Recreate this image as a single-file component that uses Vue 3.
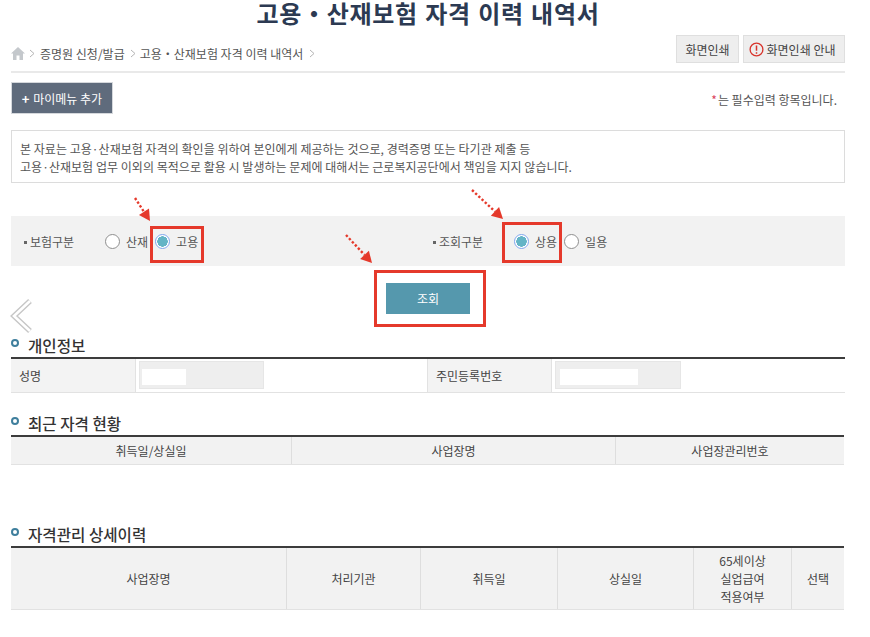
<script setup>
const crumbs = ['증명원 신청/발급', '고용・산재보험 자격 이력 내역서']
const recentCols = [
  { label: '취득일/상실일', width: 281 },
  { label: '사업장명', width: 324 },
  { label: '사업장관리번호', width: 228 }
]
const historyCols = [
  { label: ['사업장명'], width: 276 },
  { label: ['처리기관'], width: 134 },
  { label: ['취득일'], width: 137 },
  { label: ['상실일'], width: 136 },
  { label: ['65세이상', '실업급여', '적용여부'], width: 98 },
  { label: ['선택'], width: 52 }
]
function arrow(x, y, w, h) {
  const len = Math.hypot(w - 2, h - 2)
  const ux = (w - 2) / len
  const uy = (h - 2) / len
  const tipX = w - 1
  const tipY = h - 1
  const baseX = tipX - ux * 11
  const baseY = tipY - uy * 11
  const px = -uy * 6
  const py = ux * 6
  return {
    x, y, w, h,
    endX: baseX,
    endY: baseY,
    head: `M${tipX} ${tipY}L${baseX + px} ${baseY + py}L${baseX - px} ${baseY - py}Z`
  }
}
const arrows = [arrow(134, 197, 17, 25), arrow(471, 189, 33, 31), arrow(345, 234, 28, 30)]
</script>

<template>
  <div class="page">
    <h1 class="title">고용・산재보험 자격 이력 내역서</h1>

    <div class="crumb-row">
      <nav class="crumbs">
        <svg class="home" width="14" height="13" viewBox="0 0 14 13"><path d="M7 0 14 6.5H12V13H8.5V8.5H5.5V13H2V6.5H0Z" fill="#c4c8cc"/></svg>
        <svg class="sep" width="6" height="9" viewBox="0 0 6 9"><path d="M1 1 5 4.5 1 8" fill="none" stroke="#b5b5b5"/></svg>
        <span>{{ crumbs[0] }}</span>
        <svg class="sep wide" width="6" height="9" viewBox="0 0 6 9"><path d="M1 1 5 4.5 1 8" fill="none" stroke="#b5b5b5"/></svg>
        <span>{{ crumbs[1] }}</span>
        <svg class="sep last" width="6" height="9" viewBox="0 0 6 9"><path d="M1 1 5 4.5 1 8" fill="none" stroke="#b5b5b5"/></svg>
      </nav>
      <div class="print-btns">
        <button class="grey-btn first">화면인쇄</button>
        <button class="grey-btn second">
          <svg width="15" height="15" viewBox="0 0 15 15"><circle cx="7.5" cy="7.5" r="6.4" fill="none" stroke="#d8322a" stroke-width="1.3"/><path d="M7.5 3.5V8.8M7.5 10.2V11.7" stroke="#d8322a" stroke-width="1.5"/></svg>
          화면인쇄 안내
        </button>
      </div>
    </div>

    <div class="action-row">
      <button class="my-menu"><b>+</b> 마이메뉴 추가</button>
      <p class="required"><i>*</i>는 필수입력 항목입니다.</p>
    </div>

    <div class="notice">
      <p>본 자료는 고용·산재보험 자격의 확인을 위하여 본인에게 제공하는 것으로, 경력증명 또는 타기관 제출 등</p>
      <p>고용·산재보험 업무 이외의 목적으로 활용 시 발생하는 문제에 대해서는 근로복지공단에서 책임을 지지 않습니다.</p>
    </div>

    <div class="filter">
      <div class="filter-group left">
        <span class="filter-label">보험구분</span>
        <span class="radio"></span><span class="radio-text">산재</span>
        <span class="radio on gap"></span><span class="radio-text">고용</span>
      </div>
      <div class="filter-group">
        <span class="filter-label">조회구분</span>
        <span class="radio on"></span><span class="radio-text">상용</span>
        <span class="radio gap"></span><span class="radio-text">일용</span>
      </div>
    </div>

    <div class="search-row">
      <button class="search">조회</button>
    </div>

    <svg class="chevron" width="24" height="36" viewBox="0 0 24 36">
      <path d="M20 3 4 18 20 33" fill="none" stroke="#c6c6c6" stroke-width="5.4"/>
      <path d="M20 3 4 18 20 33" fill="none" stroke="#fff" stroke-width="2.6"/>
    </svg>

    <h2 class="section s1">개인정보</h2>
    <div class="info">
      <div class="info-label w1">성명</div>
      <div class="info-val v1"><div class="field"><div class="blank b1"></div></div></div>
      <div class="info-label w2">주민등록번호</div>
      <div class="info-val"><div class="field f2"><div class="blank b2"></div></div></div>
    </div>

    <h2 class="section s2">최근 자격 현황</h2>
    <div class="thead short">
      <div v-for="c in recentCols" :key="c.label" class="th" :style="{ width: c.width + 'px' }">{{ c.label }}</div>
    </div>

    <h2 class="section s3">자격관리 상세이력</h2>
    <div class="thead tall">
      <div v-for="c in historyCols" :key="c.label[0]" class="th" :style="{ width: c.width + 'px' }">
        <div>
          <div v-for="l in c.label" :key="l" class="th-line">{{ l }}</div>
        </div>
      </div>
    </div>

    <div class="mark m1"></div>
    <div class="mark m2"></div>
    <div class="mark m3"></div>

    <svg v-for="(a, i) in arrows" :key="i" class="arrow" :style="{ left: a.x + 'px', top: a.y + 'px' }" :width="a.w" :height="a.h" :viewBox="`0 0 ${a.w} ${a.h}`">
      <line x1="1" y1="1" :x2="a.endX" :y2="a.endY" stroke="#e5392b" stroke-width="2.4" stroke-dasharray="2.4 2"/>
      <path :d="a.head" fill="#e5392b"/>
    </svg>
  </div>
</template>

<style>
html, body { margin: 0; background: #fff; }
</style>

<style scoped>
.page {
  position: relative;
  width: 870px;
  height: 637px;
  overflow: hidden;
  padding: 0 25px 0 11px;
  box-sizing: border-box;
  font-family: "Noto Sans CJK KR", "Noto Sans", sans-serif;
  font-size: 12px;
  color: #444;
  background: #fff;
}
.title {
  margin: 0;
  height: 35px;
  padding-top: 1px;
  box-sizing: border-box;
  line-height: 28px;
  text-align: center;
  font-family: "Liberation Sans", "Noto Sans CJK KR", sans-serif;
  font-size: 24px;
  font-weight: 700;
  letter-spacing: 0.7px;
  color: #2c3a52;
  white-space: nowrap;
}
.crumb-row {
  display: flex;
  justify-content: space-between;
  height: 36px;
  border-bottom: 2px solid #e9e9e9;
  box-sizing: content-box;
}
.crumbs {
  display: flex;
  align-items: center;
  height: 37px;
  color: #555;
  white-space: nowrap;
}
.sep { margin: 0 5px 0 4px; }
.sep.wide { margin: 0 4px 0 5px; }
.sep.last { margin: 0 0 0 6px; }
.print-btns { display: flex; gap: 4px; height: 28px; }
.grey-btn {
  height: 28px;
  padding: 0;
  font: inherit;
  color: #444;
  background: #eee;
  border: 1px solid #dfdfdf;
  display: flex;
  align-items: center;
  justify-content: center;
  gap: 3px;
  white-space: nowrap;
}
.first { width: 63px; }
.second { width: 102px; padding-right: 4px; }
.action-row {
  display: flex;
  justify-content: space-between;
  height: 57px;
  padding: 9px 8px 0 0;
  box-sizing: border-box;
}
.my-menu {
  width: 102px;
  height: 32px;
  padding: 0;
  font: inherit;
  color: #fff;
  background: #5f6b7c;
  border: 1px solid #d5d8dc;
}
.my-menu b { font-size: 13px; margin-right: 1px; }
.required { margin: 10px 0 0; line-height: 16px; color: #555; }
.required i { color: #d9435a; font-style: normal; margin-right: 1px; }
.notice {
  height: 53px;
  border: 1px solid #dcdcdc;
  padding: 9px 8px 0;
  box-sizing: border-box;
  line-height: 18px;
  letter-spacing: 0.03px;
  color: #555;
  white-space: nowrap;
}
.notice p { margin: 0; }
.filter {
  display: flex;
  height: 50px;
  margin-top: 33px;
  background: #f2f2f2;
  align-items: center;
  color: #555;
  white-space: nowrap;
}
.filter-group { display: flex; align-items: center; }
.left { width: 422px; padding-left: 13px; box-sizing: border-box; }
.filter-label { position: relative; padding-left: 6px; width: 81px; box-sizing: border-box; }
.filter-label::before {
  content: "";
  position: absolute;
  left: 0;
  top: 8px;
  width: 3px;
  height: 3px;
  background: #666;
}
.radio {
  width: 15px;
  height: 15px;
  border: 1px solid #8f8f8f;
  border-radius: 50%;
  background: #fff;
  box-sizing: border-box;
  flex: none;
}
.radio.on {
  border: 1px solid #7fa6ee;
  background: radial-gradient(circle, #63b4c6 0 5px, #fff 5.4px);
}
.radio.gap { margin-left: 7px; }
.radio-text { margin-left: 6px; }
.search-row {
  display: flex;
  justify-content: center;
  padding-top: 17px;
  height: 48px;
  box-sizing: border-box;
}
.search {
  width: 84px;
  height: 31px;
  padding: 0;
  font: inherit;
  color: #fff;
  background: #5598ad;
  border: 0;
}
.chevron {
  display: block;
  margin: -16px 0 0 -1px;
  height: 36px;
}
.section {
  position: relative;
  margin: 0;
  padding-left: 17px;
  font-size: 15.6px;
  line-height: 20px;
  font-weight: 500;
  color: #333;
}
.section::before {
  content: "";
  position: absolute;
  left: 0;
  top: 4px;
  width: 8px;
  height: 8px;
  border: 2px solid #3f7f9d;
  border-radius: 50%;
  box-sizing: border-box;
}
.s1 { margin-top: 1px; height: 22px; }
.s2 { margin-top: 20px; height: 22px; }
.s3 { margin-top: 59px; height: 22px; }
.info {
  display: flex;
  height: 36px;
  border-top: 2px solid #3c3c3c;
  border-bottom: 1px solid #e2e2e2;
  box-sizing: border-box;
}
.info-label {
  display: flex;
  align-items: center;
  padding-left: 8px;
  background: #f3f3f3;
  border-right: 1px solid #e2e2e2;
  box-sizing: border-box;
}
.w1 { width: 125px; }
.w2 { width: 125px; border-left: 1px solid #e2e2e2; }
.info-val { padding: 2px 3px; }
.v1 { width: 291px; box-sizing: border-box; }
.field {
  width: 125px;
  height: 28px;
  background: #eee;
  border: 1px solid #e6e6e6;
  box-sizing: border-box;
  padding: 7px 2px;
}
.f2 { width: 126px; }
.blank { height: 16px; background: #fff; }
.b1 { width: 44px; }
.b2 { width: 78px; margin-left: 2px; }
.thead {
  display: flex;
  width: 833px;
  background: #f2f2f2;
  border-top: 2px solid #3c3c3c;
  border-bottom: 1px solid #e2e2e2;
  box-sizing: border-box;
}
.short { height: 30px; }
.tall { height: 64px; }
.th {
  display: flex;
  align-items: center;
  justify-content: center;
  text-align: center;
  box-sizing: border-box;
  border-right: 1px solid #dedede;
  color: #444;
}
.th:last-child { border-right: 0; flex: 1; }
.th-line { line-height: 18px; }
.mark {
  position: absolute;
  border: 3px solid #e5392b;
  box-sizing: border-box;
}
.m1 { left: 150px; top: 226px; width: 54px; height: 37px; }
.m2 { left: 502px; top: 222px; width: 60px; height: 41px; }
.m3 { left: 374px; top: 270px; width: 112px; height: 57px; }
.arrow { position: absolute; }
</style>
